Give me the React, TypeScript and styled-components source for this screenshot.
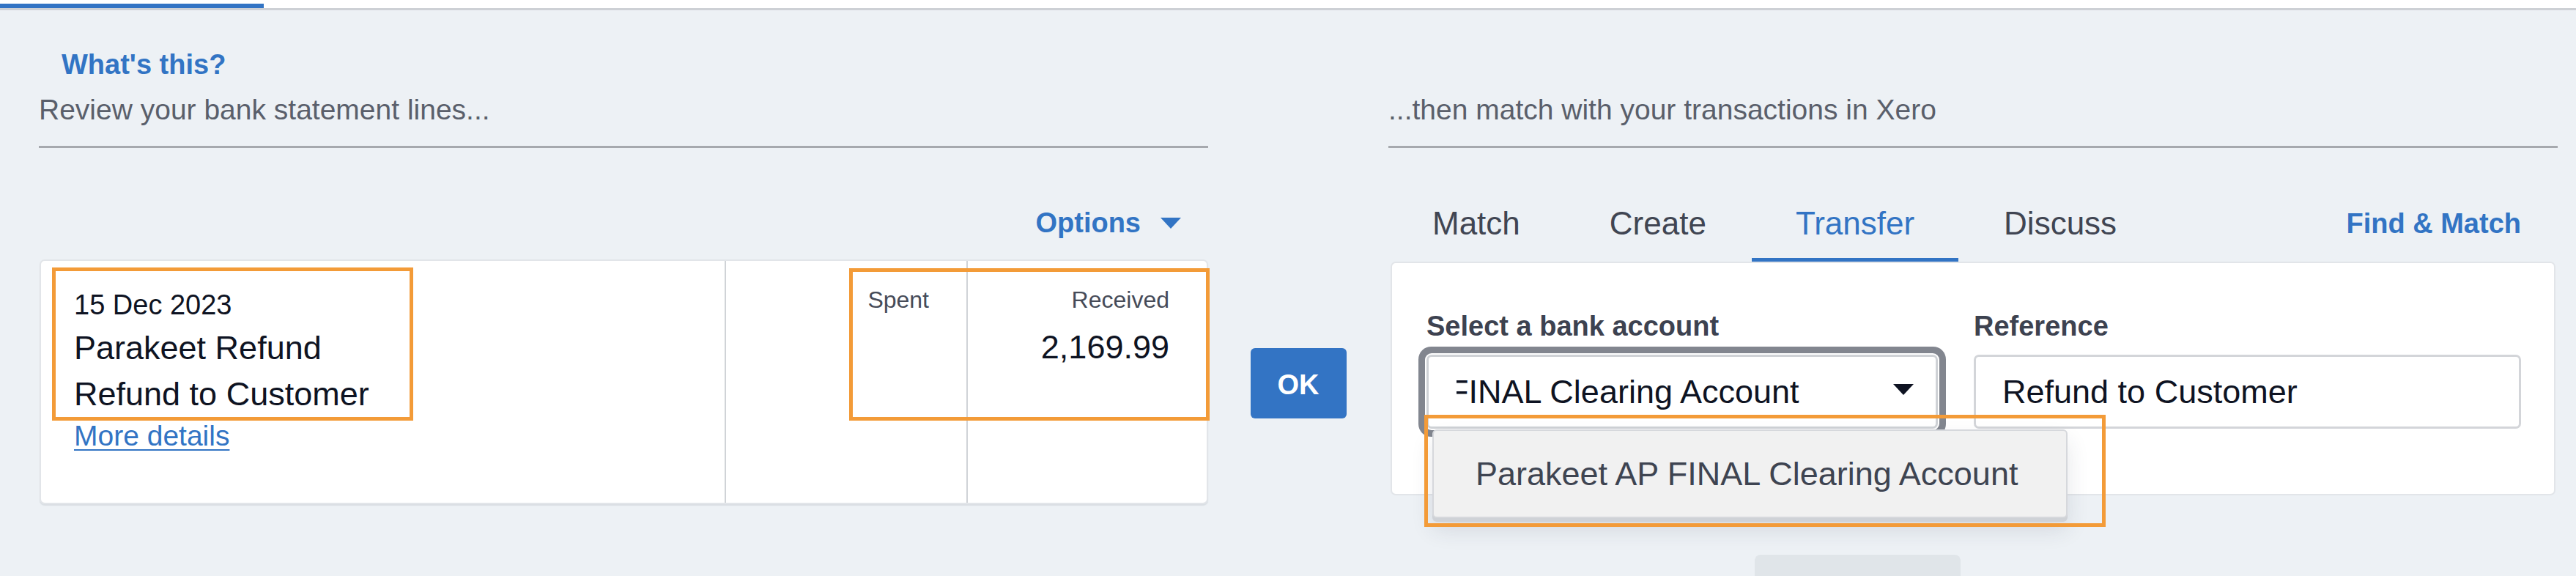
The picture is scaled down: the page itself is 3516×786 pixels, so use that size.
import React from "react";
import styled, { createGlobalStyle } from "styled-components";

const GlobalStyle = createGlobalStyle`
  html, body { margin: 0; padding: 0; }
  body {
    background: #edf1f5;
    font-family: "Liberation Sans", Arial, Helvetica, sans-serif;
  }
  * { box-sizing: border-box; }
`;

const BLUE = "#3274c4";

const Page = styled.div`
  position: relative;
  width: 3516px;
  height: 786px;
  overflow: hidden;
  background: #edf1f5;
`;

const TopStrip = styled.div`
  height: 14px;
  padding-top: 5px;
  background: #ffffff;
  border-bottom: 3px solid #cdd0d5;
`;

const TabIndicator = styled.div`
  width: 360px;
  height: 6px;
  background: ${BLUE};
`;

const Main = styled.div`
  padding: 51px 25px 0 53px;
`;

const WhatsThis = styled.a`
  display: block;
  padding-left: 31px;
  font-size: 38px;
  line-height: 46px;
  font-weight: 700;
  color: ${BLUE};
  text-decoration: none;
`;

const Columns = styled.div`
  display: flex;
  align-items: flex-start;
  padding-top: 15px;
`;

const Column = styled.div<{ $w: number }>`
  width: ${(p) => p.$w}px;
  flex: none;
  display: flex;
  flex-direction: column;
`;

const SectionHeader = styled.div`
  padding-bottom: 25px;
  border-bottom: 3px solid #a6a9ae;
  font-size: 39px;
  line-height: 48px;
  color: #5a5f6b;
`;

const OptionsRow = styled.div`
  margin-top: 79px;
  height: 46px;
  padding-right: 37px;
  display: flex;
  justify-content: flex-end;
  align-items: center;
  gap: 27px;
`;

const OptionsLink = styled.span`
  font-size: 38px;
  line-height: 46px;
  font-weight: 700;
  color: ${BLUE};
`;

const StatementCard = styled.div`
  margin-top: 27px;
  margin-left: 1px;
  height: 334px;
  background: #ffffff;
  border: 2px solid #e2e5e9;
  border-radius: 7px;
  box-shadow: 0 2px 1px rgba(200, 205, 212, 0.5);
  display: grid;
  grid-template-columns: 935px 330px 1fr;
  overflow: hidden;
`;

const DetailsCell = styled.div`
  padding: 33px 0 0 45px;
  border-right: 2px solid #d0d3d7;
  display: flex;
  flex-direction: column;
`;

const DateLine = styled.div`
  font-size: 38px;
  line-height: 54px;
  color: #0e1322;
`;

const DetailLine = styled.div`
  font-size: 45px;
  line-height: 63px;
  color: #0e1322;
`;

const MoreDetails = styled.a`
  align-self: flex-start;
  font-size: 39px;
  line-height: 51px;
  color: ${BLUE};
  text-decoration: underline;
  text-decoration-thickness: 2px;
  text-underline-offset: 5px;
`;

const AmountCell = styled.div<{ $divider?: boolean }>`
  padding: 31px 51px 0 0;
  border-right: ${(p) => (p.$divider ? "2px solid #d0d3d7" : "none")};
  display: flex;
  flex-direction: column;
  align-items: flex-end;
`;

const AmountHeading = styled.div`
  font-size: 32px;
  line-height: 44px;
  color: #464b58;
`;

const AmountValue = styled.div`
  margin-top: 12px;
  font-size: 45px;
  line-height: 62px;
  color: #0e1322;
`;

const MiddleColumn = styled.div`
  width: 246px;
  flex: none;
  display: flex;
  justify-content: center;
  padding-top: 349px;
`;

const OkButton = styled.button`
  width: 131px;
  height: 96px;
  padding: 4px 0 0;
  border: none;
  border-radius: 6px;
  background: #3374c4;
  color: #ffffff;
  font-family: "Liberation Sans", Arial, sans-serif;
  font-size: 38px;
  font-weight: 700;
  line-height: 92px;
  text-align: center;
`;

const TabsRow = styled.div`
  margin-top: 77px;
  padding-right: 50px;
  display: flex;
  align-items: flex-start;
  gap: 2px;
`;

const Tab = styled.div<{ $active?: boolean }>`
  padding: 0 60px 21px;
  border-bottom: 5px solid ${(p) => (p.$active ? BLUE : "transparent")};
  font-size: 44px;
  line-height: 52px;
  color: ${(p) => (p.$active ? BLUE : "#404552")};
  position: relative;
  z-index: 2;
`;

const FindMatch = styled.span`
  margin-left: auto;
  margin-top: 3px;
  font-size: 38px;
  line-height: 46px;
  font-weight: 700;
  color: ${BLUE};
`;

const Panel = styled.div`
  margin: 0 3px;
  height: 319px;
  background: #ffffff;
  border: 2px solid #e2e5e9;
  border-radius: 7px;
  padding: 63px 45px 0 47px;
  display: flex;
  gap: 49px;
`;

const Field = styled.div<{ $w?: number }>`
  ${(p) => (p.$w ? `width: ${p.$w}px; flex: none;` : "flex: 1;")}
  display: flex;
  flex-direction: column;
`;

const FieldLabel = styled.div`
  margin-bottom: 16px;
  font-size: 38px;
  line-height: 46px;
  font-weight: 700;
  color: #3d4250;
`;

const SelectBox = styled.div`
  position: relative;
  height: 101px;
  padding: 0 30px 0 38px;
  border: 3px solid #cfd2d6;
  border-radius: 7px;
  background: #ffffff;
  box-shadow: 0 0 0 2px #ffffff, 0 0 0 11px #82868f;
  display: flex;
  align-items: center;
`;

const SelectValue = styled.div`
  flex: 1;
  overflow: hidden;
  white-space: nowrap;
  font-size: 45px;
  line-height: 95px;
  color: #0e1322;
`;

const ScrolledText = styled.span`
  display: inline-block;
  margin-left: -11px;
`;

const Caret = styled.svg`
  flex: none;
  margin-top: -7px;
`;

const Dropdown = styled.div`
  position: absolute;
  left: 5px;
  top: 99px;
  width: 867px;
  height: 121px;
  background: #f1f1f1;
  border: 2px solid #d6d8dc;
  border-radius: 6px;
  box-shadow: 0 5px 0 #cfd2d7, 0 16px 30px rgba(40, 50, 70, 0.12);
  padding-left: 57px;
  font-size: 45px;
  line-height: 117px;
  color: #3e4451;
  white-space: nowrap;
  z-index: 5;
`;

const TextInput = styled.div`
  height: 101px;
  padding-left: 36px;
  border: 3px solid #d3d5d9;
  border-radius: 7px;
  background: #ffffff;
  font-size: 45px;
  line-height: 95px;
  color: #0e1322;
  white-space: nowrap;
`;

const GhostButton = styled.div`
  margin: 81px 0 0 500px;
  width: 281px;
  height: 60px;
  background: #e0e5e9;
  border-radius: 8px 8px 0 0;
`;

const Highlight = styled.div`
  position: absolute;
  border: 5px solid #f39b38;
  z-index: 10;
  pointer-events: none;
`;

const highlights = [
  { left: 71, top: 365, width: 493, height: 209 },
  { left: 1159, top: 366, width: 492, height: 208 },
  { left: 1944, top: 566, width: 930, height: 153 },
];

const tabs = ["Match", "Create", "Transfer", "Discuss"];

function TriangleDown({ color }: { color: string }) {
  return (
    <svg width="28" height="15" viewBox="0 0 28 15">
      <path d="M0 0 L28 0 L14 15 Z" fill={color} />
    </svg>
  );
}

export default function App() {
  return (
    <Page>
      <GlobalStyle />
      <TopStrip>
        <TabIndicator />
      </TopStrip>
      <Main>
        <WhatsThis>What's this?</WhatsThis>
        <Columns>
          <Column $w={1596}>
            <SectionHeader>Review your bank statement lines...</SectionHeader>
            <OptionsRow>
              <OptionsLink>Options</OptionsLink>
              <TriangleDown color={BLUE} />
            </OptionsRow>
            <StatementCard>
              <DetailsCell>
                <DateLine>15 Dec 2023</DateLine>
                <DetailLine>Parakeet Refund</DetailLine>
                <DetailLine>Refund to Customer</DetailLine>
                <MoreDetails>More details</MoreDetails>
              </DetailsCell>
              <AmountCell $divider>
                <AmountHeading>Spent</AmountHeading>
              </AmountCell>
              <AmountCell>
                <AmountHeading>Received</AmountHeading>
                <AmountValue>2,169.99</AmountValue>
              </AmountCell>
            </StatementCard>
          </Column>

          <MiddleColumn>
            <OkButton>OK</OkButton>
          </MiddleColumn>

          <Column $w={1596}>
            <SectionHeader>...then match with your transactions in Xero</SectionHeader>
            <TabsRow>
              {tabs.map((t) => (
                <Tab key={t} $active={t === "Transfer"}>
                  {t}
                </Tab>
              ))}
              <FindMatch>Find &amp; Match</FindMatch>
            </TabsRow>
            <Panel>
              <Field $w={698}>
                <FieldLabel>Select a bank account</FieldLabel>
                <SelectBox>
                  <SelectValue>
                    <ScrolledText>FINAL Clearing Account</ScrolledText>
                  </SelectValue>
                  <Caret width="28" height="15" viewBox="0 0 28 15">
                    <path d="M0 0 L28 0 L14 15 Z" fill="#0e1322" />
                  </Caret>
                  <Dropdown>Parakeet AP FINAL Clearing Account</Dropdown>
                </SelectBox>
              </Field>
              <Field>
                <FieldLabel>Reference</FieldLabel>
                <TextInput>Refund to Customer</TextInput>
              </Field>
            </Panel>
            <GhostButton />
          </Column>
        </Columns>
      </Main>
      {highlights.map((h, i) => (
        <Highlight
          key={i}
          style={{ left: h.left, top: h.top, width: h.width, height: h.height }}
        />
      ))}
    </Page>
  );
}
